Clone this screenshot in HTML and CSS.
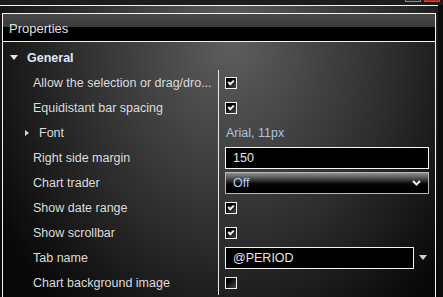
FILE: index.html
```html
<!DOCTYPE html>
<html lang="en">
<head>
  <meta charset="UTF-8" />
  <title>Properties</title>
  <link rel="stylesheet" href="styles.css">
</head>
<body>

  <div class="topbar">
    <span class="win-btn"></span>
    <span class="win-btn close"></span>
  </div>

  <div class="frame">
    <div class="panel">
      <div class="panel-header">Properties</div>

      <div class="panel-body">
        <div class="group">
          <span class="tri-down"></span>
          <span class="group-name">General</span>
        </div>

        <div class="props">
          <div class="label">Allow the selection or drag/dro...</div>
          <div class="value"><span class="check on"></span></div>

          <div class="label">Equidistant bar spacing</div>
          <div class="value"><span class="check on"></span></div>

          <div class="label sub"><span class="tri-right"></span>Font</div>
          <div class="value"><span class="font-val">Arial, 11px</span></div>

          <div class="label">Right side margin</div>
          <div class="value"><div class="input">150</div></div>

          <div class="label">Chart trader</div>
          <div class="value">
            <div class="select">
              <span>Off</span>
              <svg class="chev" width="9" height="6" viewBox="0 0 9 6"><polyline points="1,1 4.5,4.5 8,1" fill="none" stroke="#eee" stroke-width="2"/></svg>
            </div>
          </div>

          <div class="label">Show date range</div>
          <div class="value"><span class="check on"></span></div>

          <div class="label">Show scrollbar</div>
          <div class="value"><span class="check on"></span></div>

          <div class="label">Tab name</div>
          <div class="value combo">
            <div class="input short">@PERIOD</div>
            <span class="drop"></span>
          </div>

          <div class="label">Chart background image</div>
          <div class="value"><span class="check"></span></div>
        </div>
      </div>
    </div>
  </div>

</body>
</html>
```

FILE: styles.css
```css
* {
  margin: 0; padding: 0; box-sizing: border-box;
}
body {
  background: #0b0b0b;
  font-family: 'Liberation Sans', Arial, sans-serif;
  font-size: 12.5px;
  color: #dcdcdc;
  width: 443px;
  height: 297px;
  overflow: hidden;
}

/* window strip at the very top */
.topbar {
  height: 5px;
  background: #1c1c1c;
  display: flex;
  justify-content: flex-end;
  gap: 3px;
  padding-right: 3px;
  overflow: hidden;
}
.win-btn {
  width: 16px;
  height: 16px;
  margin-top: -14px;
  border: 1px solid #8a8a8a;
  background: #2a2a2a;
}
.win-btn.close {
  border-color: #d04040;
  background: #b52227;
}

.frame {
  width: 438px;
  height: 292px;
  border-top: 1px solid #f2f2f2;
  padding: 7px 0 0 2px;
  background: radial-gradient(ellipse 275px 340px at 232px 35px, #5e5e5e 0%, #303030 55%, #080808 100%);
}

.panel {
  width: 434px;
  height: 290px;
  border: 1px solid #f4f4f4;
  border-bottom: none;
}

.panel-header {
  height: 28px;
  border-bottom: 1px solid #f4f4f4;
  background: linear-gradient(#474747, #3b3b3b 48%, #000 48%, #000);
  color: #e2e2e2;
  font-size: 13px;
  padding: 7px 0 0 6px;
}

.panel-body {
  padding-top: 3px;
}

.group {
  height: 25px;
  display: flex;
  align-items: center;
  padding-left: 7px;
}
.tri-down {
  width: 0;
  height: 0;
  border-left: 4px solid transparent;
  border-right: 4px solid transparent;
  border-top: 5px solid #e6e6e6;
  margin-right: 9px;
}
.group-name {
  font-weight: bold;
  color: #dfe8f4;
}

.props {
  display: grid;
  grid-template-columns: 215px 1fr;
  grid-auto-rows: 25px;
}

.label {
  display: flex;
  align-items: center;
  padding-left: 30px;
  white-space: nowrap;
  overflow: hidden;
  text-overflow: ellipsis;
}
.label.sub {
  padding-left: 22px;
}
.tri-right {
  width: 0;
  height: 0;
  border-top: 3.5px solid transparent;
  border-bottom: 3.5px solid transparent;
  border-left: 4px solid #d8d8d8;
  margin-right: 10px;
}

.value {
  display: flex;
  align-items: center;
  border-left: 1px solid #e8e8e8;
  padding-left: 6px;
  padding-right: 6px;
}

.check {
  width: 12px;
  height: 12px;
  border: 1px solid #f0f0f0;
  background: linear-gradient(135deg, #000 30%, #4a4a4a);
  position: relative;
}
.check.on::after {
  content: '';
  position: absolute;
  left: 2px;
  top: 2px;
  width: 4px;
  height: 2px;
  border-left: 2px solid #eee;
  border-bottom: 2px solid #eee;
  transform: rotate(-45deg);
}

.font-val {
  color: #a9c3df;
  padding-left: 1px;
}

.input {
  width: 204px;
  height: 22px;
  border: 1px solid #f4f4f4;
  background: #000;
  color: #e6e6e6;
  padding: 3px 0 0 7px;
}
.input.short {
  width: 189px;
}

.select {
  width: 204px;
  height: 22px;
  border: 1px solid #b8b8b8;
  background: linear-gradient(#909090 0%, #3a3a3a 35%, #050505 55%, #000);
  color: #b4cdee;
  display: flex;
  align-items: center;
  justify-content: space-between;
  padding: 1px 7px 0 7px;
}
.chev {
  display: block;
}

.combo {
  gap: 5px;
}
.drop {
  width: 0;
  height: 0;
  border-left: 4px solid transparent;
  border-right: 4px solid transparent;
  border-top: 5px solid #d0d0d0;
  margin-top: -1px;
}
```
